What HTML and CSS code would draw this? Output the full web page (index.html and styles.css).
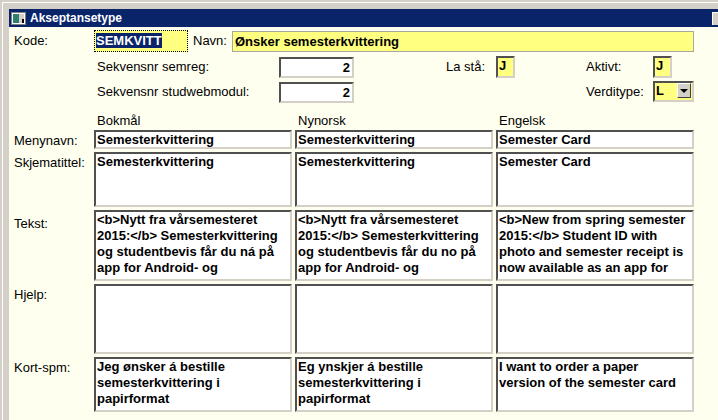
FILE: index.html
```html
<!DOCTYPE html>
<html>
<head>
<meta charset="UTF-8">
<link rel="stylesheet" href="styles.css">
</head>
<body>
<div class="frame">
  <div class="titlebar">
    <svg class="appicon" width="15" height="13" viewBox="0 0 15 13">
      <rect x="0.5" y="0.5" width="14" height="12" fill="#fff" stroke="#808080"/>
      <rect x="2" y="2" width="6" height="9" fill="#2f7f6f"/>
      <rect x="8" y="2" width="5" height="9" fill="#d4d0c8"/>
      <rect x="11" y="7" width="2" height="4" fill="#000"/>
    </svg>
    <span class="title">Akseptansetype</span>
    <span class="tbtn"></span>
  </div>

  <div class="content">
    <div class="row">
      <span class="lbl lbl-first">Kode:</span>
      <span class="kode"><span class="sel">SEMKVITT</span></span>
      <span class="lbl lbl-navn">Navn:</span>
      <span class="navn">Ønsker semesterkvittering</span>
    </div>

    <div class="row row-gap4">
      <span class="lbl lbl-first"></span>
      <span class="lbl lbl-sek">Sekvensnr semreg:</span>
      <span class="num">2</span>
      <span class="lbl lbl-la">La stå:</span>
      <span class="flag">J</span>
      <span class="lbl lbl-akt">Aktivt:</span>
      <span class="flag">J</span>
    </div>

    <div class="row row-gap3">
      <span class="lbl lbl-first"></span>
      <span class="lbl lbl-sek">Sekvensnr studwebmodul:</span>
      <span class="num">2</span>
      <span class="lbl lbl-la"></span>
      <span class="flag-space"></span>
      <span class="lbl lbl-akt">Verditype:</span>
      <span class="combo"><span class="combo-val">L</span><span class="combo-btn"></span></span>
    </div>

    <div class="grid">
      <span></span>
      <span class="hdr">Bokmål</span>
      <span class="hdr">Nynorsk</span>
      <span class="hdr">Engelsk</span>

      <span class="rowlbl">Menynavn:</span>
      <div class="fld fld-line">Semesterkvittering</div>
      <div class="fld fld-line">Semesterkvittering</div>
      <div class="fld fld-line">Semester Card</div>

      <span class="rowlbl">Skjematittel:</span>
      <div class="fld">Semesterkvittering</div>
      <div class="fld">Semesterkvittering</div>
      <div class="fld">Semester Card</div>

      <span class="rowlbl rowlbl-tekst">Tekst:</span>
      <div class="fld">&lt;b&gt;Nytt fra vårsemesteret<br>2015:&lt;/b&gt; Semesterkvittering<br>og studentbevis får du ná på<br>app for Android- og</div>
      <div class="fld">&lt;b&gt;Nytt fra vårsemesteret<br>2015:&lt;/b&gt; Semesterkvittering<br>og studentbevis får du no på<br>app for Android- og</div>
      <div class="fld">&lt;b&gt;New from spring semester<br>2015:&lt;/b&gt; Student ID with<br>photo and semester receipt is<br>now available as an app for</div>

      <span class="rowlbl">Hjelp:</span>
      <div class="fld"></div>
      <div class="fld"></div>
      <div class="fld"></div>

      <span class="rowlbl">Kort-spm:</span>
      <div class="fld">Jeg ønsker á bestille<br>semesterkvittering i<br>papirformat</div>
      <div class="fld">Eg ynskjer á bestille<br>semesterkvittering i<br>papirformat</div>
      <div class="fld">I want to order a paper<br>version of the semester card</div>
    </div>
  </div>
</div>
</body>
</html>
```

FILE: styles.css
```css
body {
  margin: 0;
  font-family: "Liberation Sans", Arial, sans-serif;
  font-size: 13px;
  color: #000;
  background: #d4d0c8;
}

/* window frame */
.frame {
  width: 718px;
  height: 420px;
  box-sizing: border-box;
  padding: 9px 0 0 9px;
  background: #d4d0c8;
  box-shadow: inset 2px 2px #d4d0c8, inset 3px 3px #fff;
  overflow: hidden;
}

.titlebar {
  height: 18px;
  background: #0a246a;
  display: flex;
  align-items: center;
}

.appicon {
  margin-left: 2px;
  margin-right: 4px;
}

.title {
  color: #fff;
  font-weight: bold;
  font-size: 12px;
}

.tbtn {
  margin-left: auto;
  width: 5px;
  height: 12px;
  background: #d4d0c8;
  border-top: 1px solid #fff;
  border-left: 1px solid #fff;
}

.content {
  background: #fffff0;
  height: 393px;
  padding-top: 3px;
}

/* top rows */
.row {
  display: flex;
  align-items: flex-start;
  height: 22px;
}

.row-gap4 { margin-top: 4px; }
.row-gap3 { margin-top: 3px; }

.lbl {
  line-height: 22px;
  white-space: nowrap;
  box-sizing: border-box;
}

.lbl-first {
  width: 85px;
  padding-left: 5px;
}

.lbl-navn {
  width: 44px;
  padding-left: 5px;
}

.lbl-sek {
  width: 185px;
  padding-left: 3px;
}

.lbl-la {
  width: 142px;
  text-align: right;
  padding-right: 11px;
}

.lbl-akt {
  width: 138px;
  padding-left: 71px;
}

.kode {
  width: 94px;
  height: 22px;
  box-sizing: border-box;
  background: #ffff80;
  border: 1px dotted #000;
  padding: 2px 0 0 1px;
  font-weight: bold;
}

.sel {
  background: #0a246a;
  color: #fff;
  display: inline-block;
  line-height: 15px;
}

.navn {
  width: 462px;
  height: 21px;
  margin-top: 1px;
  box-sizing: border-box;
  background: #ffff80;
  border: 1px solid #a8a8a0;
  padding-left: 2px;
  line-height: 19px;
  font-weight: bold;
}

.num, .flag, .combo, .fld {
  box-sizing: border-box;
  border: 2px solid;
  border-color: #505050 #d4d0c8 #d4d0c8 #505050;
}

.num {
  width: 75px;
  height: 21px;
  margin-top: 1px;
  background: #fff;
  text-align: right;
  padding-right: 2px;
  line-height: 17px;
  font-weight: bold;
}

.flag {
  width: 19px;
  height: 22px;
  background: #ffff80;
  padding-left: 1px;
  line-height: 16px;
  font-weight: bold;
}

.flag-space {
  width: 19px;
}

.combo {
  width: 41px;
  height: 21px;
  background: #ffff80;
  display: flex;
  align-items: flex-start;
}

.combo-val {
  flex: 1;
  padding-left: 1px;
  line-height: 16px;
  font-weight: bold;
}

.combo-btn {
  width: 14px;
  height: 15px;
  margin: 0 1px 0 0;
  box-sizing: border-box;
  background: #d4d0c8;
  border: 1px solid;
  border-color: #fff #404040 #404040 #fff;
  display: flex;
  align-items: center;
  justify-content: center;
}

.combo-btn::after {
  content: "";
  border-left: 4px solid transparent;
  border-right: 4px solid transparent;
  border-top: 4px solid #000;
}

/* language grid */
.grid {
  margin-top: 8px;
  display: grid;
  grid-template-columns: 82px 198px 198px 198px;
  grid-template-rows: 16px 19px 55px 71px 70px 55px;
  column-gap: 3px;
  row-gap: 3px;
}

.hdr {
  line-height: 16px;
  padding: 2px 0 0 3px;
}

.rowlbl {
  padding: 3px 0 0 5px;
  line-height: 16px;
}

.rowlbl-tekst {
  padding-top: 6px;
}

.fld {
  background: #fff;
  font-weight: bold;
  line-height: 16px;
  padding-left: 1px;
  overflow: hidden;
  white-space: nowrap;
}

.fld-line {
  line-height: 15px;
}
```
